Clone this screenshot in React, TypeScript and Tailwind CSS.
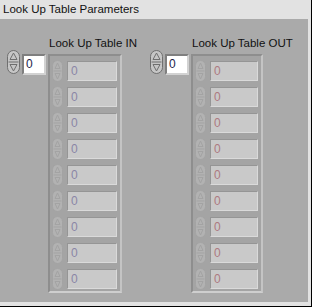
import React from 'react';

const ROWS = Array.from({ length: 9 }, (_, i) => i);

const Spinner = ({ dim = false }: { dim?: boolean }) => {
  const w = dim ? 11 : 13;
  const h = dim ? 22 : 24;
  const line = dim ? '#a3a3a3' : '#6f6f6f';
  const fill = dim ? '#b2b2b2' : '#c6c6c6';
  const mid = h / 2;
  const cx = w / 2;
  return (
    <svg width={w} height={h} viewBox={`0 0 ${w} ${h}`} className="shrink-0">
      <rect x="0.5" y="0.5" width={w - 1} height={h - 1} rx={w / 2 - 0.5} fill={fill} stroke={line} />
      <line x1="1.5" y1={mid} x2={w - 1.5} y2={mid} stroke={line} />
      <path d={`M${cx} 3 L${w - 3} ${mid - 2.5} H3 Z`} fill="none" stroke={line} />
      <path d={`M${cx} ${h - 3} L${w - 3} ${mid + 2.5} H3 Z`} fill="none" stroke={line} />
    </svg>
  );
};

const ArrayGroup = ({ label, boxW, zeroColor, className }: { label: string; boxW: string; zeroColor: string; className?: string }) => (
  <div className={`flex items-start ${className ?? ''}`}>
    <div className="flex items-start gap-[2px] mt-[14px]">
      <Spinner />
      <div className="mt-[4px] w-[24px] h-[21px] bg-white border-2 border-t-[#7f7f7f] border-l-[#7f7f7f] border-r-[#d2d2d2] border-b-[#d2d2d2] text-[12px] leading-[17px] pl-[2px] text-[#1c1c48]">
        0
      </div>
    </div>
    <div className="ml-[2px] w-[74px] flex flex-col">
      <div className="h-[14px] leading-[14px] pl-[1px] whitespace-nowrap text-[11.5px] text-[#111]">{label}</div>
      <div className="mt-[4px] self-start border-2 border-t-[#8e8e8e] border-l-[#8e8e8e] border-r-[#c4c4c4] border-b-[#cfcfcf] bg-[#a4a4a4] pt-[1px] pl-[2px] pr-[3px]">
        {ROWS.map((i) => (
          <div key={i} className="h-[26px] flex items-start gap-[4px]">
            <div className="mt-[3px]">
              <Spinner dim />
            </div>
            <div
              className={`mt-[4px] h-[20px] ${boxW} bg-[#c9c9c9] border border-t-[#959595] border-l-[#959595] border-r-[#dadada] border-b-[#dadada] text-[12px] leading-[18px] pl-[3px]`}
              style={{ color: zeroColor }}
            >
              0
            </div>
          </div>
        ))}
      </div>
    </div>
  </div>
);

export default function App() {
  return (
    <div className="w-[312px] h-[307px] bg-[#e2e2e2] border-r border-b border-black flex flex-col font-['Liberation_Sans',Arial,sans-serif]">
      <div className="h-[19px] pt-[2px] pl-[3px] text-[11.5px] leading-[14px] text-[#111]">Look Up Table Parameters</div>
      <div className="w-[308px] h-[283px] bg-[#aaaaaa] pt-[17px] pl-[7px] flex items-start">
        <ArrayGroup label="Look Up Table IN" boxW="w-[50px]" zeroColor="#8a86a6" />
        <ArrayGroup label="Look Up Table OUT" boxW="w-[48px]" zeroColor="#ad7a80" className="ml-[28px]" />
      </div>
    </div>
  );
}
